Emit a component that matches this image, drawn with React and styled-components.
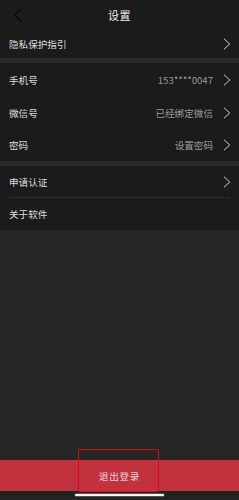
import React from "react";
import styled, { createGlobalStyle } from "styled-components";

const GlobalStyle = createGlobalStyle`
  html, body {
    margin: 0;
    padding: 0;
    background: #262626;
  }
  body {
    font-family: "Noto Sans CJK SC", "Liberation Sans", sans-serif;
  }
`;

const Page = styled("div")`
  width: 239px;
  height: 500px;
  display: flex;
  flex-direction: column;
  background: #262626;
  position: relative;
  overflow: hidden;
`;

const Header = styled("div")`
  height: 29px;
  background: #1b1b1b;
  display: flex;
  align-items: center;
  justify-content: center;
  position: relative;
`;

const BackButton = styled("div")`
  position: absolute;
  left: 12px;
  top: 7px;
  width: 14px;
  height: 16px;
  display: flex;
`;

const Title = styled("h1")`
  margin: 0;
  font-size: 11px;
  font-weight: 400;
  color: #f0f0f0;
  letter-spacing: 0.5px;
`;

const Group = styled("div")`
  background: #1b1b1b;
  display: flex;
  flex-direction: column;
`;

const Gap = styled("div")`
  height: 5px;
  background: #2a2a2a;
`;

const Row = styled("div")`
  height: ${(props) => props.h || 32}px;
  display: flex;
  align-items: center;
  padding: 0 8px 0 9px;
  position: relative;
  box-sizing: border-box;

  &::after {
    content: "";
    display: ${(props) => (props.divider ? "block" : "none")};
    position: absolute;
    left: 9px;
    right: 9px;
    bottom: 0;
    height: 1px;
    background: #2c2c2c;
  }
`;

const Label = styled("span")`
  flex: 1;
  font-size: 9.6px;
  color: #dedede;
`;

const Value = styled("span")`
  font-size: 9.6px;
  color: #9a9a9a;
  margin-right: 9px;
`;

const Chevron = styled("span")`
  width: 9px;
  height: 12px;
  display: flex;
  align-items: center;
  justify-content: center;
`;

const Spacer = styled("div")`
  flex: 1;
`;

const LogoutBar = styled("div")`
  height: 31px;
  background: #c2323e;
  display: flex;
  align-items: center;
  justify-content: center;
  font-size: 9.6px;
  color: #f0d8da;
  letter-spacing: 0.6px;
`;

const Bottom = styled("div")`
  height: 9px;
  display: flex;
  justify-content: center;
  padding-top: 3px;
  box-sizing: border-box;
  background: #232323;
`;

const HomeIndicator = styled("div")`
  width: 89px;
  height: 2px;
  background: #f4f4f4;
  border-radius: 1px;
  box-shadow: 0 0 0 0.5px #888;
`;

const Highlight = styled("div")`
  position: absolute;
  left: 78px;
  top: 449px;
  width: 81px;
  height: 43px;
  border: 1.5px solid #e0080f;
  border-radius: 2px;
  box-sizing: border-box;
  pointer-events: none;
`;

const Arrow = () => (
  <svg width="8" height="12" viewBox="0 0 8 12">
    <path d="M1 0.8 L6.8 6 L1 11.2" fill="none" stroke="#cfcfcf" strokeWidth="1" />
  </svg>
);

const Item = ({ label, value, arrow = true, divider, h }) => (
  <Row divider={divider} h={h}>
    <Label>{label}</Label>
    {value && <Value>{value}</Value>}
    <Chevron>{arrow && <Arrow />}</Chevron>
  </Row>
);

export default function App() {
  return (
    <>
      <GlobalStyle />
      <Page>
        <Header>
          <BackButton>
            <svg width="14" height="16" viewBox="0 0 14 16">
              <path d="M9 1.5 L3 8 L9 14.5" fill="none" stroke="#000000" strokeWidth="1.1" />
            </svg>
          </BackButton>
          <Title>设置</Title>
        </Header>
        <Group>
          <Item label="隐私保护指引" h={29} />
        </Group>
        <Gap />
        <Group>
          <Item label="手机号" value="153****0047" h={33} />
          <Item label="微信号" value="已经绑定微信" h={33} />
          <Item label="密码" value="设置密码" />
        </Group>
        <Gap />
        <Group>
          <Item label="申请认证" divider />
          <Item label="关于软件" arrow={false} />
        </Group>
        <Spacer />
        <LogoutBar>退出登录</LogoutBar>
        <Bottom>
          <HomeIndicator />
        </Bottom>
        <Highlight />
      </Page>
    </>
  );
}
